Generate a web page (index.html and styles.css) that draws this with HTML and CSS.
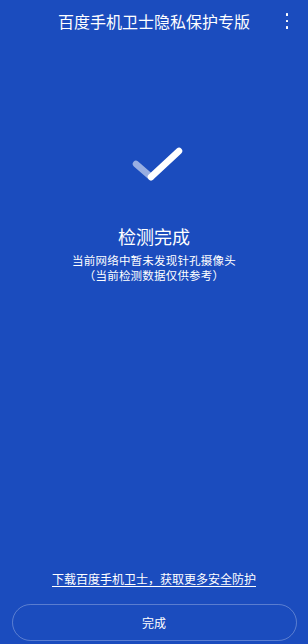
FILE: index.html
```html
<!DOCTYPE html>
<html lang="zh">
<head>
<meta charset="utf-8">
<title>百度手机卫士隐私保护专版</title>
<link rel="stylesheet" href="styles.css">
</head>
<body>
<div class="page">
  <header class="topbar">
    <h1 class="title">百度手机卫士隐私保护专版</h1>
    <div class="more" aria-label="更多"><span></span><span></span><span></span></div>
  </header>
  <main class="result">
    <svg class="check" width="60" height="44" viewBox="0 0 60 44">
      <path d="M10 21 L25 34" stroke="rgba(255,255,255,0.55)" stroke-width="6.5" stroke-linecap="round" fill="none"/>
      <path d="M25 34 L53 8" stroke="#fff" stroke-width="6.5" stroke-linecap="round" fill="none"/>
    </svg>
    <h2 class="headline">检测完成</h2>
    <p class="desc">当前网络中暂未发现针孔摄像头<br>（当前检测数据仅供参考）</p>
  </main>
  <footer class="bottom">
    <a class="link" href="#">下载百度手机卫士，获取更多安全防护</a>
    <button class="done">完成</button>
  </footer>
</div>
</body>
</html>
```
FILE: styles.css
```css
html, body {
  margin: 0;
  padding: 0;
  height: 100%;
}
body {
  background: #1b4cbe;
  font-family: "Noto Sans CJK SC", "Noto Sans", sans-serif;
  color: #fff;
}
.page {
  height: 644px;
  display: flex;
  flex-direction: column;
  overflow: hidden;
}
.topbar {
  position: relative;
  height: 42px;
  display: flex;
  align-items: center;
  justify-content: center;
}
.title {
  margin: 0;
  font-size: 16px;
  font-weight: 400;
  line-height: 20px;
}
.more {
  position: absolute;
  right: 20px;
  top: 13px;
  display: flex;
  flex-direction: column;
  gap: 4px;
}
.more span {
  width: 2.5px;
  height: 2.5px;
  background: #fff;
  border-radius: 0.5px;
}
.result {
  display: flex;
  flex-direction: column;
  align-items: center;
  padding-top: 101px;
}
.check {
  display: block;
  margin-left: 4px;
}
.headline {
  margin: 36px 0 0;
  font-size: 18px;
  font-weight: 400;
  line-height: 26px;
}
.desc {
  margin: 4px 0 0;
  font-size: 11.5px;
  line-height: 15px;
  text-align: center;
  letter-spacing: 0.2px;
}
.bottom {
  margin-top: auto;
  display: flex;
  flex-direction: column;
  align-items: center;
}
.link {
  color: #fff;
  font-size: 12px;
  line-height: 16px;
  text-decoration: underline;
  text-underline-offset: 2px;
}
.done {
  margin-top: 17px;
  margin-bottom: 3px;
  width: 285px;
  height: 37px;
  border-radius: 19px;
  border: 1px solid rgba(255, 255, 255, 0.28);
  background: transparent;
  color: #fff;
  font-family: inherit;
  font-size: 12px;
}
```
